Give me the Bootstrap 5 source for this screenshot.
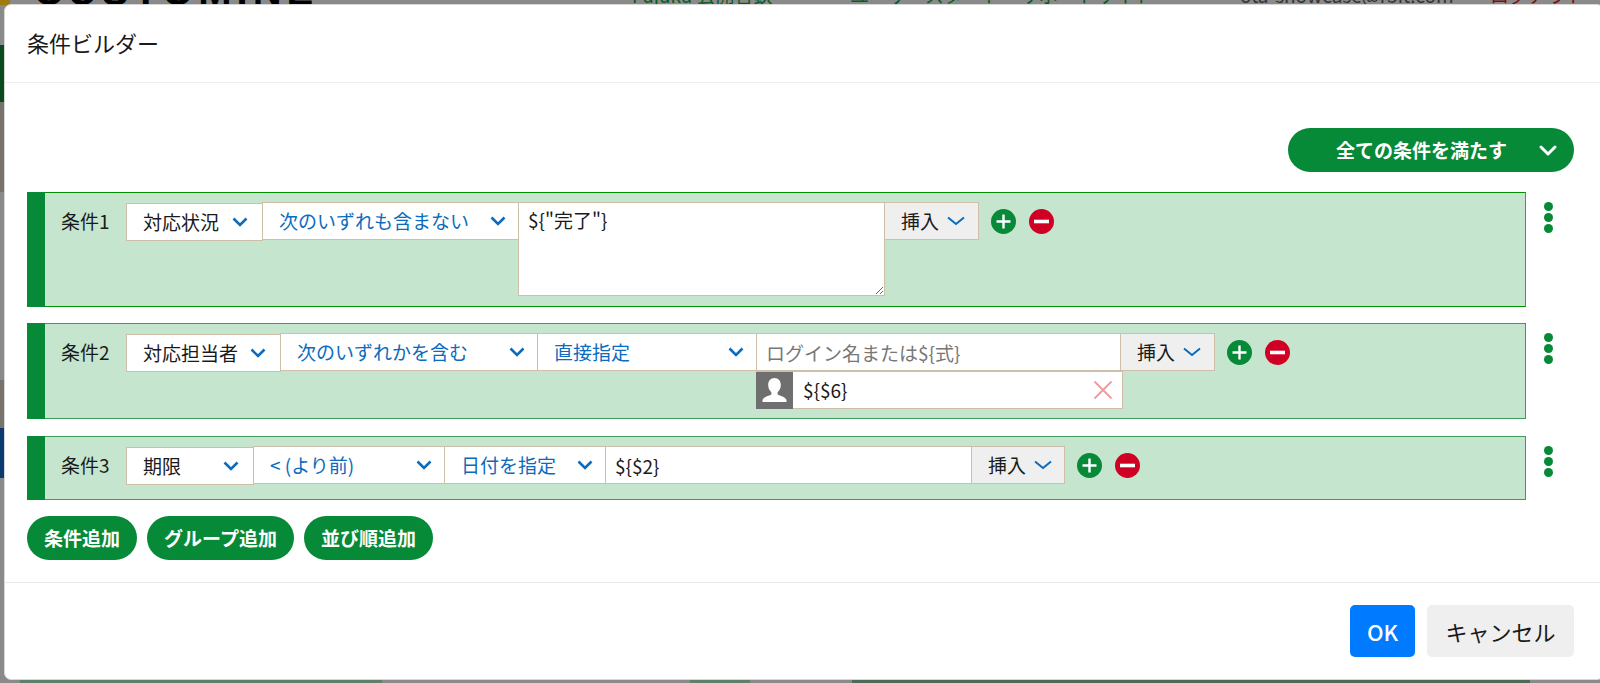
<!DOCTYPE html>
<html lang="ja">
<head>
  <meta charset="UTF-8">
  <meta name="viewport" content="width=device-width, initial-scale=1.0">
  <title>条件ビルダー</title>
  <link href="https://cdn.jsdelivr.net/npm/bootstrap@5.3.0/dist/css/bootstrap.min.css" rel="stylesheet">
  <style>
    html, body { height: 100%; }
    body {
      background-color: #8a8a8a;
      font-family: "Noto Sans CJK JP", "Noto Sans", sans-serif;
      font-size: 19px;
      color: #1a1a1a;
      overflow: hidden;
      margin: 0;
    }
    /* page behind the dialog, only its edges show */
    .behind { position: absolute; inset: 0; overflow: hidden; }
    .behind-item { position: absolute; }
    .b-gold { left: 0; top: 0; width: 10px; height: 5px; background: #a07c10; }
    .b-green { left: 0; top: 45px; width: 4px; height: 57px; background: #0b4a1f; }
    .b-warm { left: 0; top: 102px; width: 4px; height: 90px; background: #77736a; }
    .b-warm2 { left: 0; top: 380px; width: 4px; height: 48px; background: #77736a; }
    .b-navy { left: 0; top: 428px; width: 4px; height: 50px; background: #0c3a70; }
    .b-navy2 { right: 0; top: 147px; width: 4px; height: 34px; background: #0c3a70; }
    .b-foot1 { left: 20px; bottom: 0; width: 362px; height: 3px; background: #5f7f68; }
    .b-foot2 { left: 690px; bottom: 0; width: 60px; height: 3px; background: #5f7f68; }
    .b-foot3 { left: 852px; bottom: 0; width: 678px; height: 3px; background: #4f6b55; }
    .b-logo { left: 34px; top: -24px; font: 700 40px/30px "Liberation Sans", sans-serif; letter-spacing: 5px; color: #000; white-space: nowrap; }
    .b-link { top: -15px; font-size: 19px; line-height: 20px; color: #0b5a20; white-space: nowrap; }
    .b-mail { left: 1240px; top: -15px; font-size: 19px; line-height: 20px; color: #333; white-space: nowrap; }
    .b-red { left: 1490px; top: -15px; font-size: 19px; line-height: 20px; color: #7a1010; white-space: nowrap; }

    .dialog-box {
      position: relative;
      margin: 4px 4px 0 4px;
      height: 676px;
      background: #fff;
      border-radius: 7px;
      border: 1px solid #d8d8d8;
    }
    .dialog-box .modal-header { height: 78px; padding: 0 22px 2px 22px; border-bottom: 1px solid #ececec; }
    .dialog-title { font-size: 22px; font-weight: 400; color: #1a1a1a; margin: 0; }
    .dialog-box .modal-body { padding: 45px 22px 0 22px; flex: 0 0 499px; }
    .dialog-box .modal-footer { padding: 0 29px 0 22px; height: 97px; border-top: 1px solid #e6e9ed; gap: 12px; align-items: center; }

    .pill {
      background: #068a38;
      color: #fff;
      border: 0;
      height: 44px;
      border-radius: 22px;
      font-size: 19px;
      font-weight: 700;
      padding: 0 17px;
      white-space: nowrap;
    }
    .pill-match { width: 286px; padding: 0 17px 0 48px; }
    .match-line { padding-right: 7px; }

    .cond-list { margin-top: 20px; }
    .cond-wrap { margin-bottom: 16px; }
    .cond-row {
      width: 1499px;
      background: #c5e5ce;
      border: 1px solid #3f9a5c;
      border-left: 0;
      padding: 9px 0 10px 0;
      min-height: 64px;
    }
    .cond-row-first { border-top-color: #009000; border-bottom-color: #009000; height: 115px; }
    .cond-row-second { height: 96px; }
    .cond-wrap-second { margin-bottom: 17px; }
    .cond-bar { width: 18px; background: #068a38; margin: -10px 0 -11px 0; flex: none; }
    .cond-label { width: 81px; padding-left: 16px; line-height: 38px; font-size: 19px; flex: none; color: #1a1a1a; }
    .cond-sel {
      height: 38px;
      background: #fff;
      border: 1px solid #cfbfa9;
      margin-left: -1px;
      padding: 0 12px 0 16px;
      font-size: 19px;
      color: #0b6bbd;
      white-space: nowrap;
      flex: none;
    }
    .cond-sel svg { flex: none; }
    .cond-sel-key { color: #1a1a1a; margin-top: 1px; margin-left: 0; padding-right: 14px; }
    .cond-in {
      height: 38px;
      border: 1px solid #cfbfa9;
      margin-left: -1px;
      padding: 0 9px;
      font-size: 19px;
      color: #1a1a1a;
      background: #fff;
      flex: none;
      border-radius: 0;
      outline: 0;
    }
    .cond-in::placeholder { color: #777; }
    .cond-area { height: 94px; padding-top: 3px; resize: both; line-height: 28px; display: block; width: 367px; }
    .cond-ins {
      height: 38px;
      background: #efefef;
      border: 1px solid #cfbfa9;
      margin-left: -1px;
      padding: 0 12px 0 16px;
      font-size: 19px;
      color: #1a1a1a;
      flex: none;
      gap: 8px;
    }
    .round-btn {
      width: 25px;
      height: 25px;
      border: 0;
      padding: 0;
      background: none;
      flex: none;
      line-height: 0;
    }
    .round-set { gap: 13px; margin-left: 12px; padding-top: 7px; height: 38px; }
    .kebab { width: 9px; margin-left: 18px; padding-top: 10px; gap: 2px; flex: none; }
    .kebab-dot { width: 9px; height: 9px; border-radius: 50%; background: #068a38; }
    .user-col { margin-left: -1px; width: 365px; flex: none; }
    .user-col .cond-in { margin-left: 0; }
    .user-line {
      height: 38px;
      width: 367px;
      background: #fff;
      border: 1px solid #cfbfa9;
      font-size: 19px;
      color: #1a1a1a;
    }
    .user-ava { width: 37px; height: 37px; background: #6f6f6f; flex: none; margin: -1px 0 -1px -1px; }
    .user-name { padding-left: 10px; }
    .user-x { margin-left: auto; margin-right: 9px; }

    .w-s136 { width: 137px; } .w-s256 { width: 257px; } .w-s155 { width: 155px; }
    .w-s258 { width: 258px; } .w-s219 { width: 220px; } .w-s127 { width: 128px; }
    .w-s192 { width: 192px; } .w-s161 { width: 162px; }
    .w-i365 { width: 365px; } .w-i367 { width: 367px; }
    .w-ins { width: 95px; } .w-ins-last { width: 94px; }

    .add-row { gap: 10px; }
    .foot-btn { height: 52px; font-size: 22px; border-radius: 5px; border: 0; }
    .foot-ok { width: 65px; background: #007bff; color: #fff; font-weight: 500; padding: 0; }
    .foot-cancel { width: 147px; background: #efefef; color: #1a1a1a; padding: 0; }
  </style>
</head>
<body>
  <!-- page behind the dialog -->
  <div class="behind">
    <div class="behind-item b-gold"></div>
    <div class="behind-item b-green"></div>
    <div class="behind-item b-warm"></div>
    <div class="behind-item b-warm2"></div>
    <div class="behind-item b-navy"></div>
    <div class="behind-item b-navy2"></div>
    <div class="behind-item b-foot1"></div>
    <div class="behind-item b-foot2"></div>
    <div class="behind-item b-foot3"></div>
    <div class="behind-item b-logo">CUSTOMINE</div>
    <div class="behind-item b-link" style="left: 632px">Fujuku 公開合鉄</div>
    <div class="behind-item b-link" style="left: 850px">ユーザースタート</div>
    <div class="behind-item b-link" style="left: 1020px">サポートサイト</div>
    <div class="behind-item b-mail">ota-showcase@r3it.com</div>
    <div class="behind-item b-red">ログアウト</div>
  </div>

  <div class="modal-content dialog-box">
    <div class="modal-header">
      <h5 class="dialog-title">条件ビルダー</h5>
    </div>

    <div class="modal-body">
      <div class="match-line d-flex justify-content-end">
        <button class="pill pill-match d-flex align-items-center justify-content-between">
          <span>全ての条件を満たす</span>
          <svg width="18" height="11" viewBox="0 0 18 11"><path d="M2 2l7 7 7-7" fill="none" stroke="#fff" stroke-width="3" stroke-linecap="round" stroke-linejoin="round"/></svg>
        </button>
      </div>

      <div class="cond-list">
        <!-- 条件1 -->
        <div class="cond-wrap d-flex">
          <div class="cond-row cond-row-first d-flex">
            <div class="cond-bar"></div>
            <div class="cond-label">条件1</div>
            <div class="cond-sel cond-sel-key w-s136 d-flex align-items-center justify-content-between"><span>対応状況</span>
              <svg width="16" height="10" viewBox="0 0 16 10"><path d="M1.5 1.5L8 8l6.5-6.5" fill="none" stroke="#0b6bbd" stroke-width="2.6"/></svg></div>
            <div class="cond-sel w-s256 d-flex align-items-center justify-content-between"><span>次のいずれも含まない</span>
              <svg width="16" height="10" viewBox="0 0 16 10"><path d="M1.5 1.5L8 8l6.5-6.5" fill="none" stroke="#0b6bbd" stroke-width="2.6"/></svg></div>
            <div><textarea class="cond-in cond-area">${"完了"}</textarea></div>
            <div class="cond-ins w-ins d-flex align-items-center"><span>挿入</span>
              <svg width="18" height="10" viewBox="0 0 18 10"><path d="M1 1.5L9 8l8-6.5" fill="none" stroke="#0b6bbd" stroke-width="2"/></svg></div>
            <div class="round-set d-flex">
              <button class="round-btn"><svg width="25" height="25" viewBox="0 0 25 25"><circle cx="12.5" cy="12.5" r="12.5" fill="#068a38"/><path d="M12.5 5.5v14M5.5 12.5h14" stroke="#fff" stroke-width="2.4"/></svg></button>
              <button class="round-btn"><svg width="25" height="25" viewBox="0 0 25 25"><circle cx="12.5" cy="12.5" r="12.5" fill="#d00024"/><path d="M5 12.5h15" stroke="#fff" stroke-width="3.6"/></svg></button>
            </div>
          </div>
          <div class="kebab d-flex flex-column"><div class="kebab-dot"></div><div class="kebab-dot"></div><div class="kebab-dot"></div></div>
        </div>

        <!-- 条件2 -->
        <div class="cond-wrap cond-wrap-second d-flex">
          <div class="cond-row cond-row-second d-flex">
            <div class="cond-bar"></div>
            <div class="cond-label">条件2</div>
            <div class="cond-sel cond-sel-key w-s155 d-flex align-items-center justify-content-between"><span>対応担当者</span>
              <svg width="16" height="10" viewBox="0 0 16 10"><path d="M1.5 1.5L8 8l6.5-6.5" fill="none" stroke="#0b6bbd" stroke-width="2.6"/></svg></div>
            <div class="cond-sel w-s258 d-flex align-items-center justify-content-between"><span>次のいずれかを含む</span>
              <svg width="16" height="10" viewBox="0 0 16 10"><path d="M1.5 1.5L8 8l6.5-6.5" fill="none" stroke="#0b6bbd" stroke-width="2.6"/></svg></div>
            <div class="cond-sel w-s219 d-flex align-items-center justify-content-between"><span>直接指定</span>
              <svg width="16" height="10" viewBox="0 0 16 10"><path d="M1.5 1.5L8 8l6.5-6.5" fill="none" stroke="#0b6bbd" stroke-width="2.6"/></svg></div>
            <div class="user-col">
              <input class="cond-in w-i365 d-block" placeholder="ログイン名または${式}">
              <div class="user-line d-flex align-items-center">
                <div class="user-ava">
                  <svg width="37" height="37" viewBox="0 0 37 37"><path d="M18.5 6c-4 0-6.3 3-6.3 7 0 3 1.3 5.7 3.2 7.2v2.3c-2.5 1.5-7.9 2.3-8.900 5.500v2h24v-2c-1-3.200-6.400-4-8.900-5.500v-2.300c1.900-1.500 3.200-4.200 3.200-7.200 0-4-2.300-7-6.300-7z" fill="#fff"/></svg>
                </div>
                <span class="user-name">${$6}</span>
                <svg class="user-x" width="20" height="20" viewBox="0 0 20 20"><path d="M1.5 1.5l17 17M18.5 1.5l-17 17" stroke="#f09a9a" stroke-width="1.8"/></svg>
              </div>
            </div>
            <div class="cond-ins w-ins d-flex align-items-center"><span>挿入</span>
              <svg width="18" height="10" viewBox="0 0 18 10"><path d="M1 1.5L9 8l8-6.5" fill="none" stroke="#0b6bbd" stroke-width="2"/></svg></div>
            <div class="round-set d-flex">
              <button class="round-btn"><svg width="25" height="25" viewBox="0 0 25 25"><circle cx="12.5" cy="12.5" r="12.5" fill="#068a38"/><path d="M12.5 5.5v14M5.5 12.5h14" stroke="#fff" stroke-width="2.4"/></svg></button>
              <button class="round-btn"><svg width="25" height="25" viewBox="0 0 25 25"><circle cx="12.5" cy="12.5" r="12.5" fill="#d00024"/><path d="M5 12.5h15" stroke="#fff" stroke-width="3.6"/></svg></button>
            </div>
          </div>
          <div class="kebab d-flex flex-column"><div class="kebab-dot"></div><div class="kebab-dot"></div><div class="kebab-dot"></div></div>
        </div>

        <!-- 条件3 -->
        <div class="cond-wrap d-flex">
          <div class="cond-row d-flex">
            <div class="cond-bar"></div>
            <div class="cond-label">条件3</div>
            <div class="cond-sel cond-sel-key w-s127 d-flex align-items-center justify-content-between"><span>期限</span>
              <svg width="16" height="10" viewBox="0 0 16 10"><path d="M1.5 1.5L8 8l6.5-6.5" fill="none" stroke="#0b6bbd" stroke-width="2.6"/></svg></div>
            <div class="cond-sel w-s192 d-flex align-items-center justify-content-between"><span>&lt; (より前)</span>
              <svg width="16" height="10" viewBox="0 0 16 10"><path d="M1.5 1.5L8 8l6.5-6.5" fill="none" stroke="#0b6bbd" stroke-width="2.6"/></svg></div>
            <div class="cond-sel w-s161 d-flex align-items-center justify-content-between"><span>日付を指定</span>
              <svg width="16" height="10" viewBox="0 0 16 10"><path d="M1.5 1.5L8 8l6.5-6.5" fill="none" stroke="#0b6bbd" stroke-width="2.6"/></svg></div>
            <input class="cond-in w-i367" value="${$2}">
            <div class="cond-ins w-ins-last d-flex align-items-center"><span>挿入</span>
              <svg width="18" height="10" viewBox="0 0 18 10"><path d="M1 1.5L9 8l8-6.5" fill="none" stroke="#0b6bbd" stroke-width="2"/></svg></div>
            <div class="round-set d-flex">
              <button class="round-btn"><svg width="25" height="25" viewBox="0 0 25 25"><circle cx="12.5" cy="12.5" r="12.5" fill="#068a38"/><path d="M12.5 5.5v14M5.5 12.5h14" stroke="#fff" stroke-width="2.4"/></svg></button>
              <button class="round-btn"><svg width="25" height="25" viewBox="0 0 25 25"><circle cx="12.5" cy="12.5" r="12.5" fill="#d00024"/><path d="M5 12.5h15" stroke="#fff" stroke-width="3.6"/></svg></button>
            </div>
          </div>
          <div class="kebab d-flex flex-column"><div class="kebab-dot"></div><div class="kebab-dot"></div><div class="kebab-dot"></div></div>
        </div>
      </div>

      <div class="add-row d-flex">
        <button class="pill">条件追加</button>
        <button class="pill">グループ追加</button>
        <button class="pill">並び順追加</button>
      </div>
    </div>

    <div class="modal-footer">
      <button class="foot-btn foot-ok">OK</button>
      <button class="foot-btn foot-cancel">キャンセル</button>
    </div>
  </div>
</body>
</html>
